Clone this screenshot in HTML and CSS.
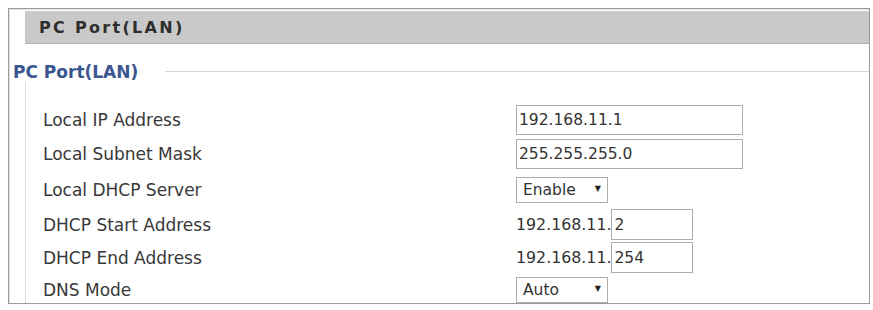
FILE: index.html
```html
<!DOCTYPE html>
<html>
<head>
<meta charset="utf-8">
<link rel="stylesheet" href="styles.css">
</head>
<body>
<div class="panel">
  <div class="header">PC Port(LAN)</div>
  <div class="legend-row">
    <span class="legend">PC Port(LAN)</span>
    <span class="legend-line"></span>
  </div>
  <div class="fs-body">
    <div class="grid">
      <div class="label">Local IP Address</div>
      <div class="ctrl"><input class="txt wide" type="text" value="192.168.11.1"></div>

      <div class="label">Local Subnet Mask</div>
      <div class="ctrl"><input class="txt wide" type="text" value="255.255.255.0"></div>

      <div class="label">Local DHCP Server</div>
      <div class="ctrl"><span class="sel"><span class="sel-text">Enable</span><span class="arrow">▼</span></span></div>

      <div class="label">DHCP Start Address</div>
      <div class="ctrl"><span class="prefix">192.168.11.</span><input class="txt short" type="text" value="2"></div>

      <div class="label">DHCP End Address</div>
      <div class="ctrl"><span class="prefix">192.168.11.</span><input class="txt short" type="text" value="254"></div>

      <div class="label">DNS Mode</div>
      <div class="ctrl"><span class="sel"><span class="sel-text">Auto</span><span class="arrow">▼</span></span></div>
    </div>
  </div>
</div>
</body>
</html>
```
FILE: styles.css
```css
html, body {
  margin: 0;
  padding: 0;
  background: #ffffff;
}
body {
  font-family: "DejaVu Sans", Verdana, sans-serif;
  color: #333333;
}
.panel {
  margin: 8px 0 0 8px;
  width: 860px;
  height: 294px;
  border: 1px solid #9c9c9c;
  box-shadow: inset 1px 1px 0 #e2e2e2;
  overflow: hidden;
}
.header {
  margin: 2px 0 0 16px;
  height: 30px;
  padding: 2px 0 0 14px;
  background: #c9c9c9;
  border-bottom: 1px solid #b3b3b3;
  font-weight: bold;
  font-size: 16px;
  line-height: 30px;
  letter-spacing: 2.3px;
  color: #2e2e2e;
}
.legend-row {
  display: flex;
  align-items: flex-start;
  margin-top: 18px;
  padding-left: 4px;
  height: 20px;
}
.legend {
  font-weight: bold;
  font-size: 17px;
  line-height: 20px;
  color: #3a5690;
}
.legend-line {
  flex: 1;
  margin: 9px 0 0 27px;
  border-top: 1px solid #d6d6d6;
}
.fs-body {
  margin-left: 16px;
  border-left: 1px solid #dcdcdc;
  padding: 21px 0 0 17px;
  height: 240px;
}
.grid {
  display: grid;
  grid-template-columns: 473px 1fr;
  grid-template-rows: 34px 34px 37px 33px 33px 32px;
  align-items: center;
}
.label {
  font-size: 17px;
  color: #383838;
}
.ctrl {
  display: flex;
  align-items: center;
}
.txt {
  box-sizing: border-box;
  height: 30px;
  border: 1px solid #acacac;
  padding: 0 2px;
  margin: 0;
  font-family: "DejaVu Sans", Verdana, sans-serif;
  font-size: 15.5px;
  color: #333333;
  background: #ffffff;
  outline: none;
}
.wide {
  width: 227px;
}
.short {
  width: 82px;
  height: 31px;
}
.prefix {
  font-size: 15.8px;
  color: #333333;
}
.sel {
  box-sizing: border-box;
  display: flex;
  align-items: center;
  justify-content: space-between;
  width: 92px;
  height: 26px;
  border: 1px solid #acacac;
  padding: 0 6px 0 6px;
  background: #ffffff;
}
.sel-text {
  font-size: 15.5px;
  color: #333333;
}
.arrow {
  font-size: 8px;
  color: #222222;
  margin-top: -3px;
}
```
